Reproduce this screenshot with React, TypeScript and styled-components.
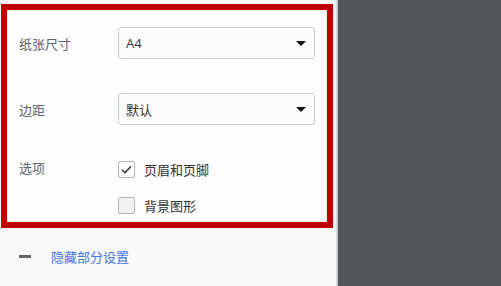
import React from "react";
import styled, { createGlobalStyle } from "styled-components";

const GlobalStyle = createGlobalStyle`
  html, body {
    margin: 0;
    padding: 0;
  }
  body {
    font-family: "Segoe UI", "Open Sans", "Noto Sans CJK SC", sans-serif;
    font-size: 13px;
  }
`;

const Page = styled.div`
  display: flex;
  height: 286px;
  overflow: hidden;
`;

const Sidebar = styled.div`
  flex: none;
  width: 336px;
  background-color: #f8f8f8;
  border-right: 1px solid #dadada;
  display: flex;
  flex-direction: column;
`;

const Viewer = styled.div`
  flex: 1;
  background-color: #525659;
  border-left: 1px solid #c9c9c9;
`;

const Highlight = styled.div`
  box-sizing: border-box;
  margin: 4px 0 0 1px;
  width: 332px;
  border: 6px solid #c00000;
  background-color: #fdfdfd;
  box-shadow: inset 0 0 0 1px #ececec;
  padding: 17px 0 8px 12px;
`;

const Row = styled.div<{ $gap?: number }>`
  display: flex;
  align-items: center;
  margin-bottom: ${({ $gap }) => $gap ?? 0}px;
`;

const Label = styled.div<{ $top?: boolean }>`
  width: 99px;
  flex: none;
  color: #5f6368;
  font-family: "Noto Sans CJK SC", sans-serif;
  align-self: ${({ $top }) => ($top ? "flex-start" : "center")};
  margin-top: ${({ $top }) => ($top ? "-3px" : "0")};
`;

const SelectBox = styled.div`
  box-sizing: border-box;
  width: 197px;
  height: 32px;
  border: 1px solid #c9c9c9;
  border-radius: 3px;
  background-color: #fbfbfb;
  display: flex;
  align-items: center;
  justify-content: space-between;
  padding: 0 8px 0 7px;
  color: #333;
  font-family: "Open Sans", "Noto Sans CJK SC", sans-serif;
  font-size: 13px;
`;

const Arrow = styled.span`
  width: 0;
  height: 0;
  border-left: 5px solid transparent;
  border-right: 5px solid transparent;
  border-top: 5px solid #111;
`;

const Options = styled.div`
  display: flex;
  flex-direction: column;
  gap: 19px;
`;

const Option = styled.label`
  display: flex;
  align-items: center;
  gap: 9px;
  height: 17px;
  color: #333;
  font-family: "Noto Sans CJK SC", sans-serif;
`;

const Box = styled.span<{ $checked?: boolean }>`
  box-sizing: border-box;
  width: 17px;
  height: 17px;
  border: 1px solid #b5b5b5;
  border-radius: 2px;
  background-color: ${({ $checked }) => ($checked ? "#fdfdfd" : "#f1f1f1")};
  display: flex;
  align-items: center;
  justify-content: center;
`;

const Footer = styled.div`
  flex: 1;
  display: flex;
  align-items: center;
  padding-left: 19px;
  padding-bottom: 1px;
`;

const Dash = styled.span`
  width: 12px;
  height: 3px;
  background-color: #666;
  margin-right: 20px;
`;

const ToggleLink = styled.a`
  color: #3f77e0;
  font-family: "Noto Sans CJK SC", sans-serif;
  text-decoration: none;
  cursor: pointer;
`;

const Check = () => (
  <svg width="13" height="13" viewBox="0 0 13 13">
    <path d="M2 6.8 L5 9.6 L11 3.4" fill="none" stroke="#444" strokeWidth="1.6" />
  </svg>
);

const App: React.FC = () => (
  <>
    <GlobalStyle />
    <Page>
      <Sidebar>
        <Highlight>
          <Row $gap={34}>
            <Label>纸张尺寸</Label>
            <SelectBox>
              <span>A4</span>
              <Arrow />
            </SelectBox>
          </Row>
          <Row $gap={36}>
            <Label>边距</Label>
            <SelectBox>
              <span>默认</span>
              <Arrow />
            </SelectBox>
          </Row>
          <Row>
            <Label $top>选项</Label>
            <Options>
              <Option>
                <Box $checked>
                  <Check />
                </Box>
                页眉和页脚
              </Option>
              <Option>
                <Box />
                背景图形
              </Option>
            </Options>
          </Row>
        </Highlight>
        <Footer>
          <Dash />
          <ToggleLink>隐藏部分设置</ToggleLink>
        </Footer>
      </Sidebar>
      <Viewer />
    </Page>
  </>
);

export default App;
